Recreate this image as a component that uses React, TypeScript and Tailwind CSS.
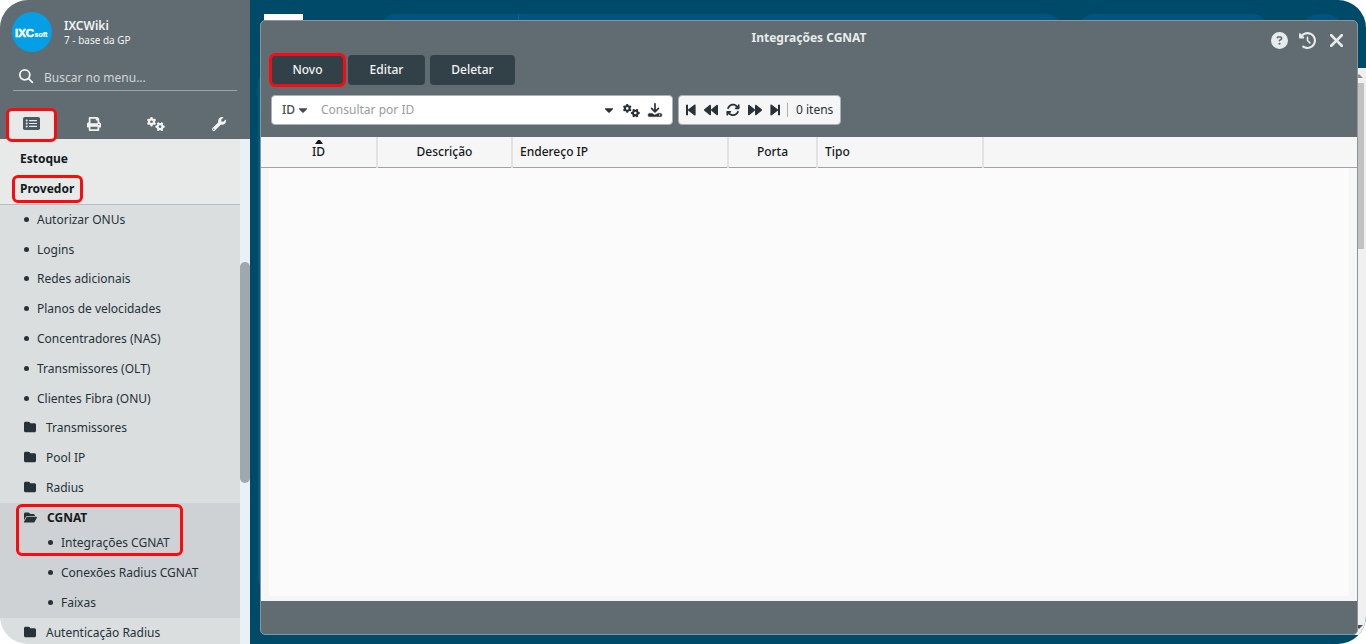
import type { ReactNode } from "react";
import { FaBackward, FaCaretDown, FaForward, FaPrint, FaWrench } from "react-icons/fa";
import {
  FaArrowsRotate,
  FaCircleQuestion,
  FaClockRotateLeft,
  FaFolder,
  FaFolderOpen,
  FaGears,
  FaXmark,
} from "react-icons/fa6";

const linkItems = [
  "Autorizar ONUs",
  "Logins",
  "Redes adicionais",
  "Planos de velocidades",
  "Concentradores (NAS)",
  "Transmissores (OLT)",
  "Clientes Fibra (ONU)",
];

const folderItems = ["Transmissores", "Pool IP", "Radius"];

const cgnatItems = ["Integrações CGNAT", "Conexões Radius CGNAT", "Faixas"];

const columns = [
  { name: "ID", className: "w-[116px] text-center", sorted: true },
  { name: "Descrição", className: "w-[135px] text-center" },
  { name: "Endereço IP", className: "w-[216px] pl-[7px] text-left" },
  { name: "Porta", className: "w-[89px] text-center" },
  { name: "Tipo", className: "w-[166px] pl-[7px] text-left" },
];

function Highlight({ className }: { className: string }) {
  return (
    <span
      aria-hidden="true"
      className={`pointer-events-none absolute z-10 rounded-md border-3 border-[#fb0b0f] ${className}`}
    />
  );
}

function Dot() {
  return <span className="mb-px size-[5px] shrink-0 rounded-full bg-[#263238]" />;
}

function SearchIcon() {
  return (
    <svg viewBox="0 0 16 16" className="mb-0.5 size-4 shrink-0" fill="none" stroke="currentColor" strokeWidth="1.8" strokeLinecap="round">
      <circle cx="6.8" cy="6.8" r="5" />
      <path d="M10.6 10.6 14.4 14.4" />
    </svg>
  );
}

function ListIcon() {
  return (
    <svg viewBox="0 0 17 13" className="h-[13px] w-[17px]" fill="#4b5a60">
      <rect width="17" height="13" rx="1.8" />
      <g fill="#e7eae9">
        <circle cx="3.7" cy="3.6" r="1" />
        <circle cx="3.7" cy="6.5" r="1" />
        <circle cx="3.7" cy="9.4" r="1" />
        <rect x="6" y="3" width="8" height="1.2" rx=".5" />
        <rect x="6" y="5.9" width="8" height="1.2" rx=".5" />
        <rect x="6" y="8.8" width="8" height="1.2" rx=".5" />
      </g>
    </svg>
  );
}

function DownloadIcon() {
  return (
    <svg viewBox="0 0 16 16" className="size-4" fill="none" stroke="currentColor" strokeWidth="1.7" strokeLinecap="round" strokeLinejoin="round">
      <path d="M8 1.8v7.8M4.6 6.4 8 9.8l3.4-3.4" />
      <path d="M4.8 11.4H2.6A1.4 1.4 0 0 0 1.2 12.8v.6A1.2 1.2 0 0 0 2.4 14.600h11.2a1.2 1.2 0 0 0 1.2-1.2v-.6a1.4 1.4 0 0 0-1.400-1.400h-2.200L8 13z" fill="currentColor" strokeWidth=".6" />
      <circle cx="12.7" cy="13" r=".7" fill="#fff" stroke="none" />
    </svg>
  );
}

function StepIcon({ className = "" }: { className?: string }) {
  return (
    <svg viewBox="0 0 10 12" className={`h-3 w-2.5 ${className}`} fill="currentColor">
      <path d="M0 .8h2v4.600L8.600.6Q9.600 0 9.600 1.200v9.600q0 1.200-1 .6L2 6.600v4.600H0z" />
    </svg>
  );
}

function FolderRow({ label }: { label: string }) {
  return (
    <a href="#" className="flex items-center gap-2.5 pl-6">
      <FaFolder className="mb-0.5 size-3" />
      {label}
    </a>
  );
}

function Sidebar() {
  return (
    <aside className="flex w-[250px] shrink-0 flex-col bg-[#e8f1f6]">
      <div className="flex h-[139px] shrink-0 flex-col bg-[#606c71] text-[#f2f4f4]">
        <div className="flex items-center gap-3 px-3 pt-3">
          <svg viewBox="0 0 40 40" className="size-10" role="img" aria-label="IXCsoft">
            <circle cx="20" cy="20" r="20" fill="#049fe4" />
            <g fill="#fff" stroke="#fff" fontFamily="Liberation Sans, sans-serif" fontWeight="700">
              <text x="3" y="24.5" fontSize="11.5" strokeWidth=".5">IXC</text>
              <text x="22.5" y="24.5" fontSize="7" strokeWidth=".2">soft</text>
            </g>
          </svg>
          <div>
            <p className="text-xs leading-4 font-semibold">IXCWiki</p>
            <p className="text-[10px] leading-3">7 - base da GP</p>
          </div>
        </div>
        <label className="mx-[13px] mt-3 flex h-[27px] items-center gap-2.5 border-b border-[#9aa5aa] pl-[5px]">
          <SearchIcon />
          <input
            type="search"
            aria-label="Buscar no menu"
            placeholder="Buscar no menu..."
            className="w-full bg-transparent pt-0.5 text-xs outline-none placeholder:text-[#d0d5d7]"
          />
        </label>
        <nav aria-label="Seções" className="mt-auto flex h-[29px]">
          <button type="button" aria-label="Menu" className="relative flex flex-1 items-center justify-center">
            <span className="flex h-full w-[47px] items-center justify-center bg-[#e7eae9] pb-0.5">
              <ListIcon />
            </span>
            <Highlight className="-top-0.5 -bottom-[3px] left-1.5 w-[51px]" />
          </button>
          <button type="button" aria-label="Relatórios" className="flex flex-1 items-center justify-center pb-0.5">
            <FaPrint className="size-[14px]" />
          </button>
          <button type="button" aria-label="Configurações" className="flex flex-1 items-center justify-center pb-0.5">
            <FaGears className="size-[18px]" />
          </button>
          <button type="button" aria-label="Ferramentas" className="flex flex-1 items-center justify-center pb-0.5">
            <FaWrench className="size-[14px]" />
          </button>
        </nav>
      </div>

      <div className="flex min-h-0 flex-1">
        <nav aria-label="Menu principal" className="flex-1 overflow-hidden bg-[#dadedf] text-xs text-[#263238]">
          <div className="border-b border-[#b4bfc5] bg-[#e7eae9] pt-[5px] font-bold text-[#15191b]">
            <a href="#" className="flex h-[30px] items-center pl-5">Estoque</a>
            <a href="#" className="relative flex h-[30px] items-center pl-5">
              Provedor
              <Highlight className="top-px left-3 h-7 w-[71px]" />
            </a>
          </div>
          <div className="grid h-[298px] auto-rows-fr">
            {linkItems.map((label) => (
              <a key={label} href="#" className="flex items-center gap-2 pl-6">
                <Dot />
                {label}
              </a>
            ))}
            {folderItems.map((label) => (
              <FolderRow key={label} label={label} />
            ))}
          </div>
          <div className="relative bg-[#ced2d4] pt-[5px]">
            <a href="#" className="flex h-5 items-center gap-2.5 pl-6 font-bold text-[#15191b]">
              <FaFolderOpen className="mb-0.5 size-[13px] text-[#263238]" />
              CGNAT
            </a>
            {cgnatItems.map((label) => (
              <a key={label} href="#" className="flex h-[30px] items-center gap-2 pl-12">
                <Dot />
                {label}
              </a>
            ))}
            <Highlight className="top-px left-4 h-[52px] w-[167px]" />
          </div>
          <div className="grid h-[30px]">
            <FolderRow label="Autenticação Radius" />
          </div>
        </nav>
        <div className="w-2.5 pt-[123px]">
          <div className="h-[221px] rounded-full bg-[#a0a8ad]" />
        </div>
      </div>
    </aside>
  );
}

function Backdrop() {
  return (
    <div aria-hidden="true" className="absolute inset-0">
      <div className="absolute top-[14px] left-[14px] h-8 w-[39px] bg-white" />
      <div className="absolute top-[14px] right-[304px] left-[130px] h-8 rounded-full bg-[#005580]" />
      <div className="absolute top-[14px] left-[268px] h-8 w-px bg-[#00699a]" />
      <div className="absolute top-[14px] right-[98px] h-8 w-[190px] rounded-full bg-[#005580]" />
      <div className="absolute top-[14px] right-[22px] h-10 w-11 rounded-full bg-[#005580]" />
      <div className="absolute top-[68px] bottom-[50px] left-2 w-10 rounded-2xl bg-[#005a80]" />
      <div className="absolute top-[68px] right-0 bottom-[9px] w-4 bg-[#f0f0f0]">
        <svg viewBox="0 0 8 4" className="absolute top-[6px] left-[5px] h-1 w-2" fill="#8c8c8c">
          <path d="M0 4 4 0 8 4z" />
        </svg>
        <div className="absolute top-[15px] right-0.5 h-[166px] w-3 bg-[#c1c1c1]" />
        <svg viewBox="0 0 8 4" className="absolute bottom-[6px] left-[5px] h-1 w-2" fill="#505050">
          <path d="M0 0 4 4 8 0z" />
        </svg>
      </div>
    </div>
  );
}

function IconButton({ label, children }: { label: string; children: ReactNode }) {
  return (
    <button type="button" aria-label={label} className="flex items-center justify-center">
      {children}
    </button>
  );
}

function ActionButton({ label, className, children }: { label: string; className: string; children?: ReactNode }) {
  return (
    <button
      type="button"
      className={`relative h-[30px] rounded bg-[#324148] text-xs font-medium text-[#f2f4f4] ${className}`}
    >
      {label}
      {children}
    </button>
  );
}

function Dialog() {
  return (
    <section
      aria-label="Integrações CGNAT"
      className="relative flex min-w-0 flex-1 flex-col overflow-hidden rounded-[5px] border border-[#8a9499] bg-[#606c71]"
    >
      <header className="grid h-[34px] grid-cols-[1fr_auto_1fr] px-2.5 text-[#e8ebeb]">
        <h1 className="col-start-2 pt-[9px] text-xs leading-4 font-bold">Integrações CGNAT</h1>
        <div className="flex items-center justify-end gap-2.5 pt-1">
          <IconButton label="Ajuda"><FaCircleQuestion className="mr-px size-[17px]" /></IconButton>
          <IconButton label="Histórico"><FaClockRotateLeft className="size-[17px]" /></IconButton>
          <IconButton label="Fechar"><FaXmark className="size-[21px]" /></IconButton>
        </div>
      </header>

      <div className="flex gap-[5px] pl-[11px]">
        <ActionButton label="Novo" className="w-[71px]">
          <Highlight className="-inset-x-[3px] -inset-y-0.5" />
        </ActionButton>
        <ActionButton label="Editar" className="w-[77px]" />
        <ActionButton label="Deletar" className="w-[85px]" />
      </div>

      <div className="flex gap-[5px] py-2.5 pb-3 pl-2.5 text-xs text-[#263238]">
        <div className="flex h-[30px] w-[402px] items-center rounded border border-[#a9b2b6] bg-white pr-[9px] pl-2.5">
          <div className="relative flex items-center">
            <select aria-label="Campo de busca" className="w-7 appearance-none bg-transparent font-medium text-[#4a4a4a] outline-none">
              <option>ID</option>
            </select>
            <FaCaretDown className="pointer-events-none absolute left-[14px] size-[14px] text-[#4a4a4a]" />
          </div>
          <input
            type="text"
            aria-label="Consultar por ID"
            placeholder="Consultar por ID"
            className="ml-[11px] min-w-0 flex-1 outline-none placeholder:text-[#9b9b9b]"
          />
          <div className="flex items-center gap-[7px]">
            <IconButton label="Opções de busca"><FaCaretDown className="size-[14px]" /></IconButton>
            <IconButton label="Filtros"><FaGears className="size-[17px]" /></IconButton>
            <IconButton label="Exportar"><DownloadIcon /></IconButton>
          </div>
        </div>
        <div className="flex h-[30px] items-center rounded border border-[#a9b2b6] bg-[#f6f6f6] px-[7px]">
          <div className="flex items-center gap-2">
            <IconButton label="Primeira página"><StepIcon /></IconButton>
            <IconButton label="Página anterior"><FaBackward className="size-[14px]" /></IconButton>
            <IconButton label="Atualizar"><FaArrowsRotate className="size-[14px]" /></IconButton>
            <IconButton label="Próxima página"><FaForward className="size-[14px]" /></IconButton>
            <IconButton label="Última página"><StepIcon className="rotate-180" /></IconButton>
          </div>
          <span className="ml-[7px] border-l border-[#a9b2b6] pl-2 leading-[14px]">0 itens</span>
        </div>
      </div>

      <div className="flex min-h-0 flex-1 flex-col bg-[#f6f6f6]">
        <table className="w-full table-fixed border-collapse text-xs text-[#15191b]">
          <thead>
            <tr className="h-[30px] border-b border-[#9aa5a6]">
              {columns.map((column) => (
                <th
                  key={column.name}
                  scope="col"
                  className={`relative border-r-2 border-[#e2e2e2] p-0 font-medium ${column.className}`}
                >
                  {column.sorted && (
                    <svg viewBox="0 0 8 4" className="absolute top-[3px] left-1/2 h-1 w-2 -translate-x-1/2" fill="currentColor">
                      <path d="M0 4 3 0h2l3 4z" />
                    </svg>
                  )}
                  {column.name}
                </th>
              ))}
              <td />
            </tr>
          </thead>
        </table>
        <div className="mx-2 mb-[5px] flex-1 bg-[#fbfbfb]" />
      </div>
      <footer className="h-[33px] shrink-0" />
    </section>
  );
}

export default function App() {
  return (
    <div className="h-screen bg-white font-['Noto_Sans',sans-serif]">
      <div className="flex h-full overflow-hidden rounded-[28px]">
        <Sidebar />
        <main className="relative flex min-w-0 flex-1 bg-[#004a69] pt-5 pr-2 pb-[9px] pl-2.5">
          <Backdrop />
          <Dialog />
        </main>
      </div>
    </div>
  );
}
